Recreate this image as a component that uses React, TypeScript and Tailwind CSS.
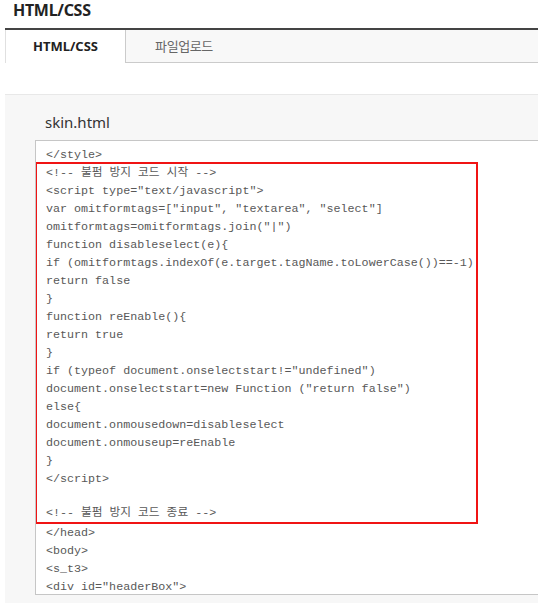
const beforeLines = ['</style>']

const markedLines = [
  '<!-- 불펌 방지 코드 시작 -->',
  '<script type="text/javascript">',
  'var omitformtags=["input", "textarea", "select"]',
  'omitformtags=omitformtags.join("|")',
  'function disableselect(e){',
  'if (omitformtags.indexOf(e.target.tagName.toLowerCase())==-1)',
  'return false',
  '}',
  'function reEnable(){',
  'return true',
  '}',
  'if (typeof document.onselectstart!="undefined")',
  'document.onselectstart=new Function ("return false")',
  'else{',
  'document.onmousedown=disableselect',
  'document.onmouseup=reEnable',
  '}',
  '</script>',
  '',
  '<!-- 불펌 방지 코드 종료 -->',
]

const afterLines = ['</head>', '<body>', '<s_t3>', '<div id="headerBox">']

const CodeLine = ({ text }: { text: string }) => {
  if (!text) return <div className="h-[16px]" />
  return <div className="h-[18px] whitespace-pre">{text}</div>
}

export default function App() {
  return (
    <div className="w-[538px] h-[603px] overflow-hidden bg-white flex flex-col font-['Noto_Sans','Noto_Sans_CJK_KR',sans-serif]">
      {/* Page title */}
      <h1 className="h-[20px] leading-[20px] pl-[13px] mb-[8px] text-[16px] font-bold tracking-[-0.3px] text-[#222]">
        HTML/CSS
      </h1>

      {/* Tabs */}
      <div className="ml-[5px] h-[35px] flex border-t-2 border-t-[#444] border-b border-b-[#cbcbcb] bg-[#f8f8f8]">
        <div className="w-[121px] h-[33px] flex items-center justify-center bg-white border-l border-l-[#e0e0e0] border-r border-r-[#cbcbcb] text-[13px] font-bold text-[#222]">
          HTML/CSS
        </div>
        <div className="w-[116px] flex items-center justify-center text-[13px] tracking-[-0.4px] text-[#666] font-['Noto_Sans_CJK_KR',sans-serif]">
          파일업로드
        </div>
      </div>

      {/* Editor area */}
      <div className="flex-1 ml-[5px] mt-[31px] border-t border-t-[#e8e8e8] bg-[#f7f7f7] pt-[17px] pl-[30px]">
        <div className="h-[20px] leading-[20px] ml-[10px] mb-[8px] text-[15px] text-[#333]">skin.html</div>

        <div className="w-[520px] h-[455px] overflow-hidden border border-[#c6c6c6] bg-white pt-[5px] text-[11.7px] leading-[18px] text-[#585858] font-['Liberation_Mono','Noto_Sans_CJK_KR',monospace]">
          <div className="pl-[10px]">
            {beforeLines.map((line, i) => (
              <CodeLine key={i} text={line} />
            ))}
          </div>
          <div className="w-[443px] -ml-px -mt-[2px] pl-[9px] border-2 border-[#f01414]">
            {markedLines.map((line, i) => (
              <CodeLine key={i} text={line} />
            ))}
          </div>
          <div className="pl-[10px]">
            {afterLines.map((line, i) => (
              <CodeLine key={i} text={line} />
            ))}
          </div>
        </div>
      </div>
    </div>
  )
}
